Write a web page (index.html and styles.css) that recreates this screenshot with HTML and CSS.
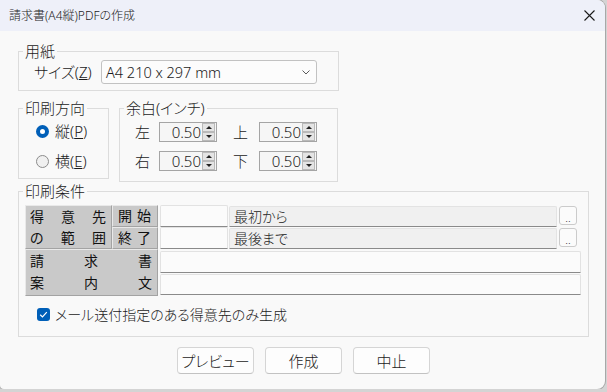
FILE: index.html
```html
<!DOCTYPE html>
<html lang="ja">
<head>
<meta charset="utf-8">
<title>請求書(A4縦)PDFの作成</title>
<link rel="stylesheet" href="styles.css">
</head>
<body>
<div class="window">
  <div class="titlebar">
    <span class="title">請求書(A4縦)PDFの作成</span>
    <svg class="close" viewBox="0 0 11 11" width="11" height="11"><path d="M0.5 0.5 L10.5 10.5 M10.5 0.5 L0.5 10.5" stroke="#1a1a1a" stroke-width="1.1" fill="none"/></svg>
  </div>
  <div class="content">
    <fieldset class="group g-paper">
      <legend>用紙</legend>
      <div class="paper-inner">
        <span class="lbl-size">サイズ(<u>Z</u>)</span>
        <div class="select">
          <span>A4 210 x 297 mm</span>
          <svg class="chev" viewBox="0 0 8 5" width="8" height="5"><polyline points="0.5,0.5 4,4 7.5,0.5" stroke="#5a5a5a" stroke-width="1" fill="none"/></svg>
        </div>
      </div>
    </fieldset>

    <div class="row2">
      <fieldset class="group g-orient">
        <legend>印刷方向</legend>
        <div class="orient-inner">
          <div class="radio-row"><span class="radio on"></span><span>縦(<u>P</u>)</span></div>
          <div class="radio-row"><span class="radio"></span><span>横(<u>E</u>)</span></div>
        </div>
      </fieldset>
      <fieldset class="group g-margin">
        <legend>余白(インチ)</legend>
        <div class="margin-inner">
          <div class="m-row">
            <span class="m-lbl">左</span>
            <div class="spin"><span class="val">0.50</span><span class="arrows"><span class="arr up"></span><span class="arr down"></span></span></div>
            <span class="m-lbl m-lbl2">上</span>
            <div class="spin"><span class="val">0.50</span><span class="arrows"><span class="arr up"></span><span class="arr down"></span></span></div>
          </div>
          <div class="m-row">
            <span class="m-lbl">右</span>
            <div class="spin"><span class="val">0.50</span><span class="arrows"><span class="arr up"></span><span class="arr down"></span></span></div>
            <span class="m-lbl m-lbl2">下</span>
            <div class="spin"><span class="val">0.50</span><span class="arrows"><span class="arr up"></span><span class="arr down"></span></span></div>
          </div>
        </div>
      </fieldset>
    </div>

    <fieldset class="group g-cond">
      <legend>印刷条件</legend>
      <div class="cond-inner">
        <div class="cond-top">
          <div class="cell c-range">
            <div class="jline"><span>得</span><span>意</span><span>先</span></div>
            <div class="jline"><span>の</span><span>範</span><span>囲</span></div>
          </div>
          <div class="se-col">
            <div class="cell c-se"><div class="jline"><span>開</span><span>始</span></div></div>
            <div class="cell c-se"><div class="jline"><span>終</span><span>了</span></div></div>
          </div>
          <div class="range-rows">
            <div class="range-row"><div class="inp inp-s"></div><div class="disp">最初から</div><div class="dots">..</div></div>
            <div class="range-row"><div class="inp inp-s"></div><div class="disp">最後まで</div><div class="dots">..</div></div>
          </div>
        </div>
        <div class="cond-bottom">
          <div class="cell c-doc">
            <div class="jline"><span>請</span><span>求</span><span>書</span></div>
            <div class="jline"><span>案</span><span>内</span><span>文</span></div>
          </div>
          <div class="doc-inputs">
            <div class="inp inp-l"></div>
            <div class="inp inp-l inp-l2"></div>
          </div>
        </div>
        <div class="check-row">
          <span class="checkbox"><svg viewBox="0 0 13 13" width="13" height="13"><polyline points="3.2,6.8 5.5,9 9.8,4.2" stroke="#ffffff" stroke-width="1.2" fill="none"/></svg></span>
          <span>メール送付指定のある得意先のみ生成</span>
        </div>
      </div>
    </fieldset>

    <div class="buttons">
      <div class="btn">プレビュー</div>
      <div class="btn">作成</div>
      <div class="btn">中止</div>
    </div>
  </div>
</div>
</body>
</html>
```

FILE: styles.css
```css
* { box-sizing: border-box; }

body {
  margin: 0;
  background: #d4d4d4;
  font-family: "Noto Sans", "Noto Sans CJK JP", sans-serif;
  font-size: 15px;
  font-weight: 300;
  color: #1b1b1b;
  font-feature-settings: "palt";
}

.window {
  width: 605px;
  height: 389px;
  background: #f9f9f9;
  border-radius: 0 8px 8px 4px;
  overflow: hidden;
  box-shadow: 0 0 0 1px #a8a8a8;
}

.titlebar {
  height: 31px;
  background: #eef0f9;
  display: flex;
  align-items: center;
  justify-content: space-between;
  padding: 0 10px 0 9px;
  font-size: 12px;
  line-height: 16px;
}

.close { display: block; }

.content {
  padding: 11px 16px 0 18px;
}

fieldset.group {
  margin: 0;
  padding: 0;
  border: 1px solid #dcdcdc;
  min-width: 0;
}

legend {
  padding: 0 2px;
  margin-left: 4px;
  font-size: 15px;
  line-height: 18px;
}

/* paper */
.g-paper { width: 321px; }

.paper-inner {
  display: flex;
  align-items: center;
  padding: 0 20px 6px 15px;
}

.lbl-size {
  width: 67px;
  line-height: 24px;
}

.select {
  width: 216px;
  height: 24px;
  border: 1px solid #c2c2c2;
  border-radius: 3px;
  background: #fcfcfc;
  display: flex;
  align-items: center;
  justify-content: space-between;
  padding: 0 6px 0 4px;
  font-size: 14.5px;
  line-height: 20px;
}

.chev { display: block; }

/* row 2 */
.row2 {
  display: flex;
  gap: 10px;
  align-items: flex-start;
  margin-top: 8px;
}

.g-orient { width: 91px; height: 80px; }

.orient-inner {
  padding: 4px 0 0 17px;
  display: flex;
  flex-direction: column;
  gap: 10px;
}

.radio-row {
  display: flex;
  align-items: center;
  height: 20px;
  gap: 6px;
  line-height: 20px;
}

.radio {
  width: 13px;
  height: 13px;
  border-radius: 50%;
  border: 1px solid #8c8c8c;
  background: #f0f0f0;
}

.radio.on {
  border: 4px solid #005fb8;
  background: #ffffff;
}

.g-margin { width: 219px; height: 83px; }

.margin-inner {
  padding: 5px 0 0 15px;
  display: flex;
  flex-direction: column;
  gap: 9px;
}

.m-row {
  display: flex;
  align-items: center;
  height: 20px;
}

.m-lbl { width: 24px; line-height: 20px; }
.m-lbl2 { width: 26px; margin-left: 16px; }

.spin {
  width: 58px;
  height: 20px;
  border: 1px solid #a5a5a5;
  background: #f6f6f6;
  display: flex;
}

.val {
  flex: 1;
  text-align: right;
  line-height: 18px;
  padding-right: 1px;
}

.arrows {
  width: 14px;
  display: flex;
  flex-direction: column;
  padding: 0 1px 0 0;
}

.arr {
  height: 9px;
  background: #e4e4e4;
  border: 1px solid #b9b9b9;
  display: flex;
  align-items: center;
  justify-content: center;
}

.arr::before {
  content: "";
  border-left: 3px solid transparent;
  border-right: 3px solid transparent;
}

.up::before { border-bottom: 3px solid #222; }
.down::before { border-top: 3px solid #222; }

/* conditions */
.g-cond {
  width: 571px;
  height: 155px;
  margin-top: 9px;
}

.cond-inner { padding: 5px 0 0 6px; }

.cond-top { display: flex; height: 44px; }

.cell {
  background: #c9c9c9;
  border-top: 1px solid #e9e9e9;
  border-left: 1px solid #e9e9e9;
  border-right: 1px solid #a3a3a3;
  border-bottom: 1px solid #a3a3a3;
  font-size: 14px;
  font-weight: 400;
  color: #111;
}

.jline {
  display: flex;
  justify-content: space-between;
  align-items: center;
  height: 21px;
  line-height: 20px;
}

.c-range { width: 87px; height: 44px; padding: 0 5px 0 4px; }
.se-col { display: flex; flex-direction: column; width: 46px; }
.c-se { height: 22px; padding: 0 6px 0 5px; }
.c-se .jline { height: 20px; }

.range-rows {
  margin-left: 2px;
  display: flex;
  flex-direction: column;
}

.range-row {
  display: flex;
  height: 22px;
  align-items: flex-start;
}

.inp {
  background: #fbfbfb;
  border: 1px solid #e2e2e2;
  border-bottom: 1px solid #8a8a8a;
  border-radius: 2px 2px 0 0;
}

.inp-s { width: 68px; height: 22px; }

.disp {
  width: 328px;
  height: 21px;
  margin: 1px 0 0 1px;
  background: #f0f0f0;
  border: 1px solid #e3e3e3;
  border-bottom: 1px solid #8a8a8a;
  border-radius: 2px 2px 0 0;
  padding-left: 4px;
  font-size: 14px;
  line-height: 19px;
}

.dots {
  width: 18px;
  height: 19px;
  margin: 1px 0 0 2px;
  background: #fbfbfb;
  border: 1px solid #cbcbcb;
  border-radius: 3px;
  font-size: 11px;
  line-height: 22px;
  text-align: center;
}

.cond-bottom { display: flex; height: 47px; }

.c-doc { width: 133px; height: 47px; padding: 0 5px 0 4px; }
.c-doc .jline { height: 22px; }

.doc-inputs {
  margin-left: 2px;
  padding-top: 2px;
  display: flex;
  flex-direction: column;
  gap: 1px;
}

.inp-l { width: 421px; height: 22px; }
.inp-l2 { height: 21px; }

.check-row {
  display: flex;
  align-items: center;
  gap: 5px;
  margin: 12px 0 0 12px;
  height: 13px;
  font-size: 14px;
  line-height: 18px;
}

.checkbox {
  width: 13px;
  height: 13px;
  border-radius: 3px;
  background: #005fb8;
  display: block;
}

.checkbox svg { display: block; }

/* buttons */
.buttons {
  display: flex;
  justify-content: center;
  gap: 11px;
  margin-top: 10px;
}

.btn {
  width: 77px;
  height: 27px;
  border: 1px solid #d5d5d5;
  border-bottom-color: #c2c2c2;
  border-radius: 4px;
  background: #fdfdfd;
  display: flex;
  align-items: center;
  justify-content: center;
  line-height: 20px;
}
```
